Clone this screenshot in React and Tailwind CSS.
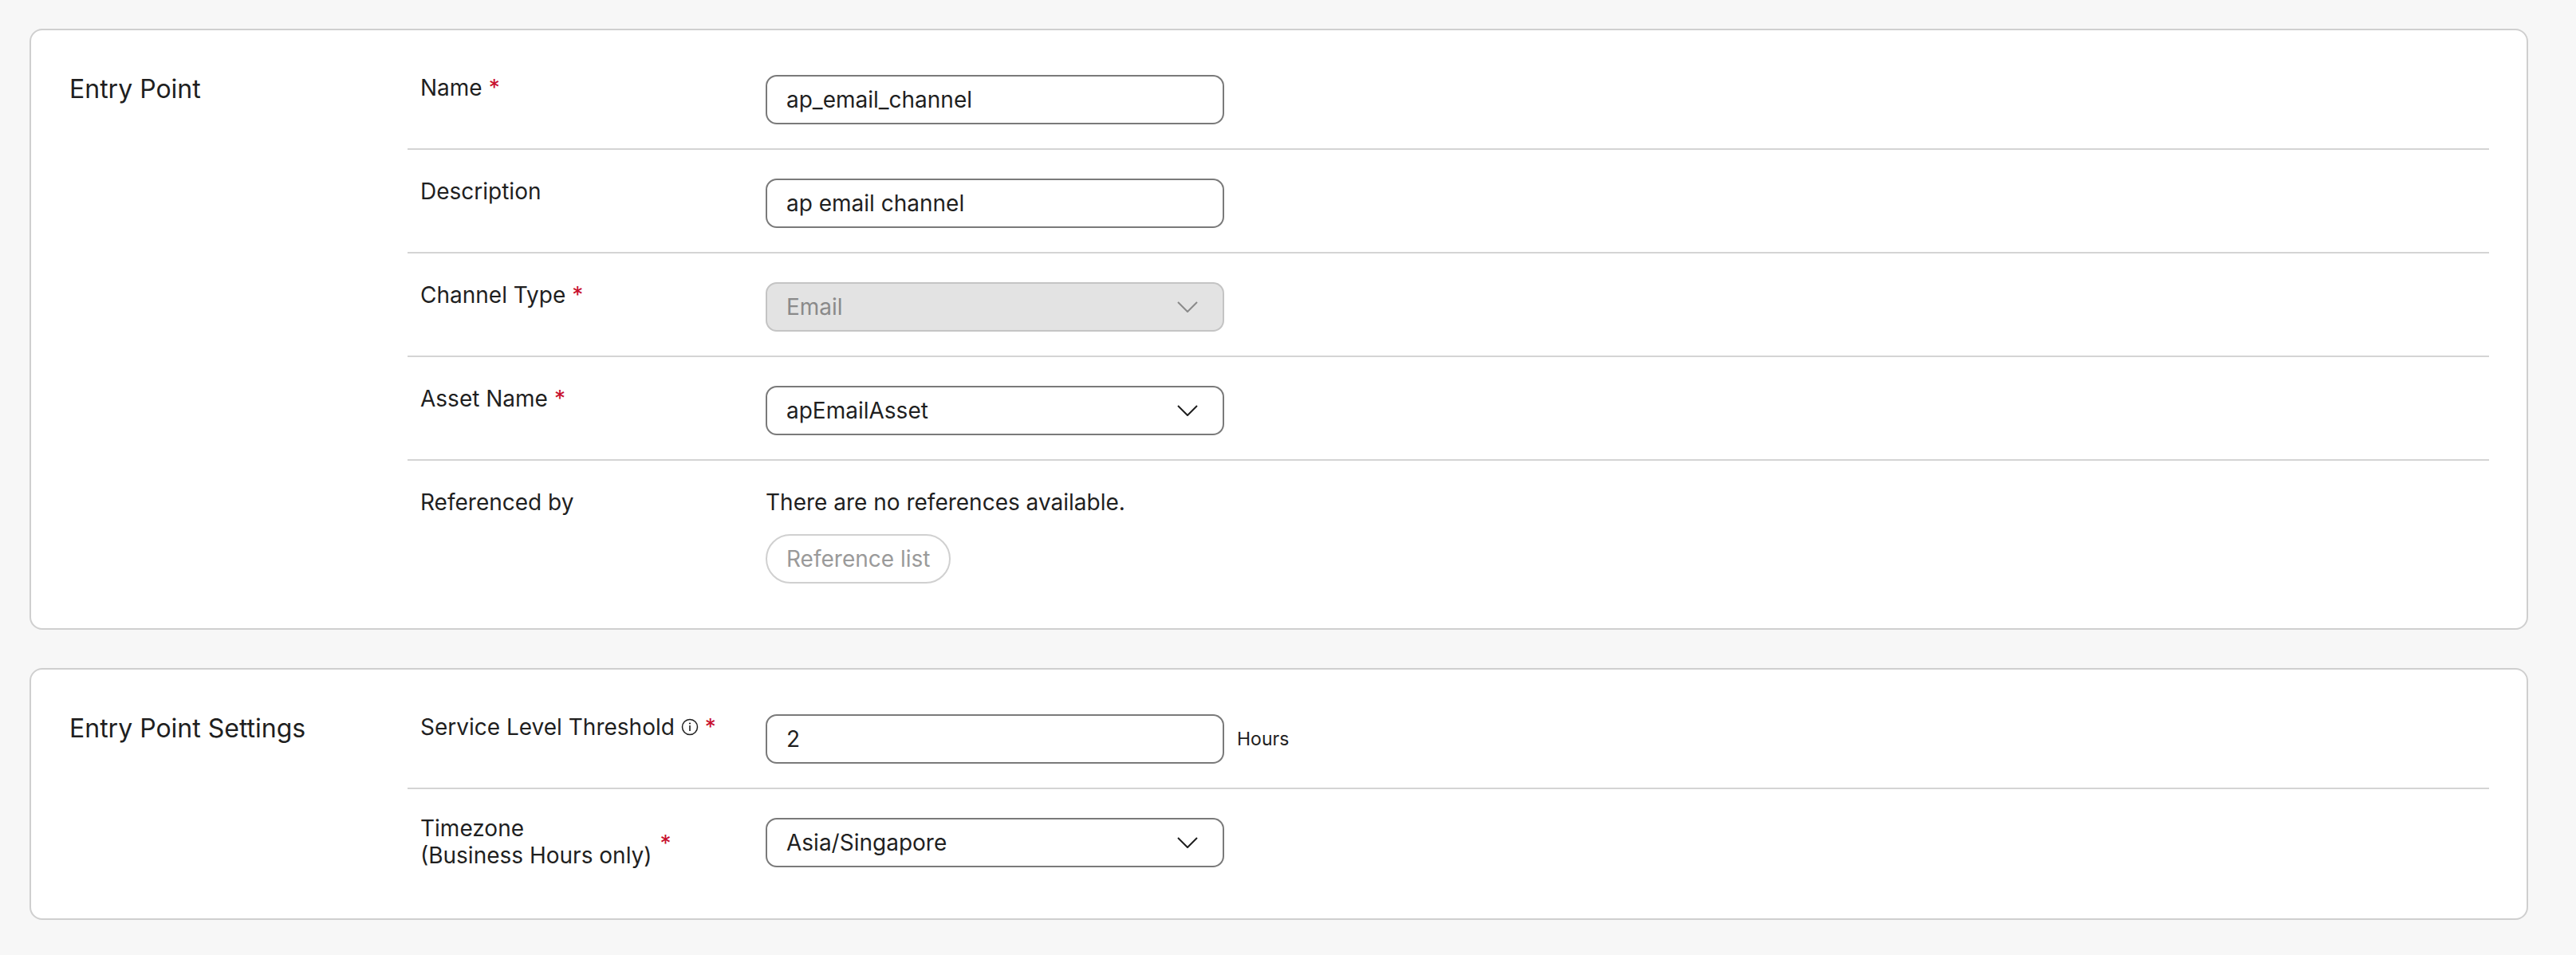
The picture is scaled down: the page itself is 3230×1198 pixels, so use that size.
import React from "react";

const Chevron = ({ c = "#1f1f1f" }) => (
  <svg width="26" height="14" viewBox="0 0 26 14" fill="none" className="absolute right-[8px] top-1/2 -translate-y-1/2 mr-[23px]">
    <path d="M1 1 L13 13 L25 1" stroke={c} strokeWidth="2" strokeLinejoin="round" />
  </svg>
);

const Star = () => <span className="text-[#c8102e] ml-[8px]">*</span>;

function Row({ label, last, children }) {
  return (
    <div className={`flex pt-[32px] pb-[30px] pl-[16px] ${last ? "" : "border-b-2 border-[#d4d4d4]"}`}>
      <div className="w-[433px] shrink-0 text-[28px] leading-[40px] text-[#1f1f1f]">{label}</div>
      <div className="pt-[4px] flex-1">{children}</div>
    </div>
  );
}

const Input = ({ value, select, disabled, after }) => (
  <div className="flex items-center">
    <div
      className={`relative w-[575px] h-[62px] rounded-[14px] border-2 flex items-center px-[24px] text-[28px] ${
        disabled ? "bg-[#e3e3e3] border-[#c4c4c4] text-[#8a8a8a]" : "bg-white border-[#7a7a7a] text-[#1f1f1f]"
      }`}
    >
      {value}
      {select && <Chevron c={disabled ? "#8a8a8a" : "#1f1f1f"} />}
    </div>
    {after}
  </div>
);

function Card({ title, children, pb }) {
  return (
    <div className={`bg-white border-2 border-[#cfcfcf] rounded-[16px] flex pt-[20px] pr-[47px] ${pb}`}>
      <div className="w-[472px] shrink-0 pl-[48px] pt-[32px] text-[32px] leading-[44px] text-[#1f1f1f]">{title}</div>
      <div className="flex-1">{children}</div>
    </div>
  );
}

export default function App() {
  return (
    <div className="min-h-[1198px] bg-[#f7f7f7] pl-[37px] pr-[60px] pt-[36px] flex flex-col gap-[48px]" style={{ fontFamily: "Inter, 'Noto Sans', sans-serif" }}>
      <Card title="Entry Point" pb="pb-[26px]">
        <Row label={<>Name<Star /></>}><Input value="ap_email_channel" /></Row>
        <Row label="Description"><Input value="ap email channel" /></Row>
        <Row label={<>Channel Type<Star /></>}><Input value="Email" select disabled /></Row>
        <Row label={<>Asset Name<Star /></>}><Input value="apEmailAsset" select /></Row>
        <Row label="Referenced by" last>
          <div className="-mt-[4px] text-[28px] leading-[40px] text-[#1f1f1f]">There are no references available.</div>
          <button className="mt-[20px] h-[62px] px-[24px] rounded-full border-2 border-[#d0d0d0] text-[28px] text-[#9a9a9a] bg-white">Reference list</button>
        </Row>
      </Card>
      <Card title="Entry Point Settings" pb="pb-[32px]">
        <Row label={
          <span className="flex items-center">Service Level Threshold
            <svg width="22" height="22" viewBox="0 0 22 22" className="ml-[8px]"><circle cx="11" cy="11" r="9.5" fill="none" stroke="#1f1f1f" strokeWidth="1.5"/><rect x="10.2" y="9" width="1.6" height="7" fill="#1f1f1f"/><circle cx="11" cy="6.5" r="1.1" fill="#1f1f1f"/></svg>
            <Star /></span>
        }>
          <Input value="2" after={<span className="ml-[16px] text-[23px] text-[#1f1f1f]">Hours</span>} />
        </Row>
        <Row last label={
          <span className="flex items-center">
            <span className="leading-[34px]">Timezone<br />(Business Hours only)</span>
            <span className="text-[#c8102e] ml-[10px] mt-[4px]">*</span>
          </span>
        }>
          <Input value="Asia/Singapore" select />
        </Row>
      </Card>
    </div>
  );
}
